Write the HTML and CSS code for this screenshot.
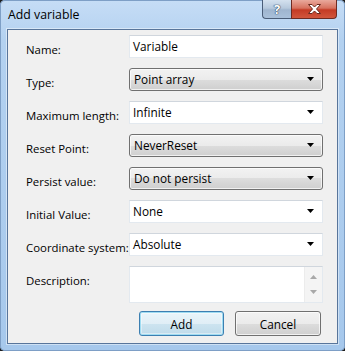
FILE: index.html
```html
<!DOCTYPE html>
<html>
<head>
    <title>Add variable</title>
    <link rel="stylesheet" href="styles.css">
</head>
<body>
    <div class="window">
        <div class="titlebar">
            <span class="title">Add variable</span>
            <div class="caption-buttons">
                <div class="cap-btn help">?</div>
                <div class="cap-btn close">
                    <svg width="13" height="10" viewBox="0 0 13 10">
                        <polygon points="0.5,0.5 4,0.5 6.5,3 9,0.5 12.5,0.5 8.5,5 12.5,9.5 9,9.5 6.5,7 4,9.5 0.5,9.5 4.5,5" fill="#fff" stroke="#6b2a1f" stroke-width="1"/>
                    </svg>
                </div>
            </div>
        </div>

        <div class="client">
            <div class="form">
                <label>Name:</label>
                <div class="field text">Variable</div>

                <label>Type:</label>
                <div class="field combo">Point array<svg class="arrow" width="7" height="4"><polygon points="0,0 7,0 3.5,4" fill="#000"/></svg></div>

                <label>Maximum length:</label>
                <div class="field text edit-combo">Infinite<svg class="arrow" width="7" height="4"><polygon points="0,0 7,0 3.5,4" fill="#000"/></svg></div>

                <label>Reset Point:</label>
                <div class="field combo">NeverReset<svg class="arrow" width="7" height="4"><polygon points="0,0 7,0 3.5,4" fill="#000"/></svg></div>

                <label>Persist value:</label>
                <div class="field combo">Do not persist<svg class="arrow" width="7" height="4"><polygon points="0,0 7,0 3.5,4" fill="#000"/></svg></div>

                <label>Initial Value:</label>
                <div class="field text edit-combo">None<svg class="arrow" width="7" height="4"><polygon points="0,0 7,0 3.5,4" fill="#000"/></svg></div>

                <label>Coordinate system:</label>
                <div class="field text edit-combo">Absolute<svg class="arrow" width="7" height="4"><polygon points="0,0 7,0 3.5,4" fill="#000"/></svg></div>

                <label class="top">Description:</label>
                <div class="field memo">
                    <div class="memo-text"></div>
                    <div class="scrollbar">
                        <svg width="7" height="4"><polygon points="3.5,0 7,4 0,4" fill="#a8a8a8"/></svg>
                        <svg width="7" height="4"><polygon points="0,0 7,0 3.5,4" fill="#a8a8a8"/></svg>
                    </div>
                </div>
            </div>

            <div class="buttons">
                <button class="btn default">Add</button>
                <button class="btn">Cancel</button>
            </div>
        </div>
    </div>
</body>
</html>
```

FILE: styles.css
```css
body {
    margin: 0;
    background: #1e1e1e;
    font-family: 'Open Sans', 'Noto Sans', sans-serif;
    font-size: 11.4px;
    color: #000;
}

.window {
    width: 345px;
    height: 351px;
    box-sizing: border-box;
    display: flex;
    flex-direction: column;
    background: linear-gradient(#c6ddf6, #b3d1f0 40px, #a6c8ec);
    border-radius: 5px;
    box-shadow: inset 0 0 0 1px #7e9fc6;
}

.titlebar {
    height: 29px;
    display: flex;
    align-items: center;
    padding-left: 8px;
}

.title {
    font-size: 12.3px;
    color: #000;
}

.caption-buttons {
    margin-left: auto;
    margin-right: 8px;
    align-self: flex-start;
    display: flex;
}

.cap-btn {
    height: 19px;
    box-sizing: border-box;
    border: 1px solid #4a5d78;
    border-top: none;
    display: flex;
    align-items: center;
    justify-content: center;
}

.help {
    width: 29px;
    border-radius: 0 0 0 4px;
    border-right: none;
    background: linear-gradient(#d4e1ef, #b7c9dd 45%, #9fb5cf 55%, #a9c0da);
    color: #fff;
    font-weight: bold;
    font-size: 13px;
    text-shadow: 0 0 1px #2f4563, 0 0 1px #2f4563, 0 0 1px #2f4563;
}

.close {
    width: 46px;
    border-radius: 0 0 4px 0;
    border-color: #6e2b22;
    background: linear-gradient(#e9a99c, #d7725f 45%, #c43b25 55%, #d1563d);
}

.client {
    margin: 0 7px 7px 7px;
    flex: 1;
    background: #f0f0f0;
    border: 1px solid #58759b;
    box-shadow: 0 0 0 1px rgba(255, 255, 255, 0.45);
    padding: 5px 14px 6px 18px;
    display: flex;
    flex-direction: column;
}

.form {
    display: grid;
    grid-template-columns: 103px 194px;
    row-gap: 10px;
    align-items: center;
}

label {
    white-space: nowrap;
    margin-top: 6px;
}

label.top {
    align-self: start;
    margin-top: 7px;
}

.field {
    height: 23px;
    box-sizing: border-box;
    display: flex;
    align-items: center;
    padding: 0 8px 1px 3px;
    white-space: nowrap;
    font-size: 11.8px;
}

.text {
    background: #fff;
    border: 1px solid #e3e9ef;
    border-top-color: #d0d6dd;
}

.combo {
    padding-left: 4px;
    border: 1px solid #707070;
    border-radius: 3px;
    background: linear-gradient(#f2f2f2, #ebebeb 50%, #dddddd 50%, #cfcfcf);
    box-shadow: inset 0 0 0 1px rgba(255, 255, 255, 0.7);
}

.arrow {
    margin-left: auto;
}

.memo {
    height: 37px;
    padding: 0;
    align-items: stretch;
    background: #fff;
    border: 1px solid #e3e9ef;
    border-top-color: #d0d6dd;
}

.memo-text {
    flex: 1;
}

.scrollbar {
    width: 17px;
    background: #f4f4f4;
    border-left: 1px solid #ececec;
    display: flex;
    flex-direction: column;
    align-items: center;
    justify-content: space-between;
    padding: 8px 0 8px;
}

.buttons {
    display: flex;
    justify-content: flex-end;
    gap: 11px;
    margin-top: 8px;
    padding-right: 2px;
}

.btn {
    height: 25px;
    width: 86px;
    font-family: inherit;
    font-size: 11.8px;
    color: #000;
    border: 1px solid #707070;
    border-radius: 3px;
    background: linear-gradient(#f2f2f2, #ebebeb 50%, #dddddd 50%, #cfcfcf);
    box-shadow: inset 0 0 0 1px rgba(255, 255, 255, 0.7);
    padding: 0;
}

.btn.default {
    width: 85px;
    border-color: #3c7fb1;
    box-shadow: inset 0 0 0 1px #9fdcf2, inset 0 0 0 2px rgba(255, 255, 255, 0.4);
    background: linear-gradient(#eaf5fa, #e0eef6 50%, #cde4f0 50%, #bfdbea);
}
```
